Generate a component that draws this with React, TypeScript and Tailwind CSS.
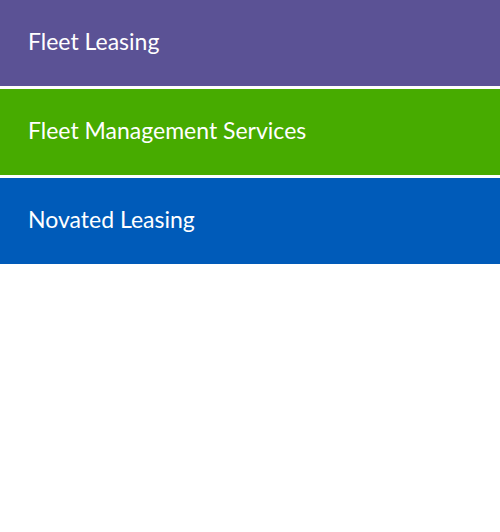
const items = [
  { label: "Fleet Leasing", bg: "bg-[#5b5295]" },
  { label: "Fleet Management Services", bg: "bg-[#47ab00]" },
  { label: "Novated Leasing", bg: "bg-[#005bb9]" },
];

export default function App() {
  return (
    <div className="w-[500px] h-[532px] bg-white flex flex-col gap-[3px]" style={{ fontFamily: "Lato, 'Noto Sans', sans-serif" }}>
      {items.map((item) => (
        <a
          key={item.label}
          href="#"
          className={`${item.bg} h-[86px] flex items-center pl-[28px] pb-[4px] text-white text-[23px]`}
        >
          {item.label}
        </a>
      ))}
    </div>
  );
}
